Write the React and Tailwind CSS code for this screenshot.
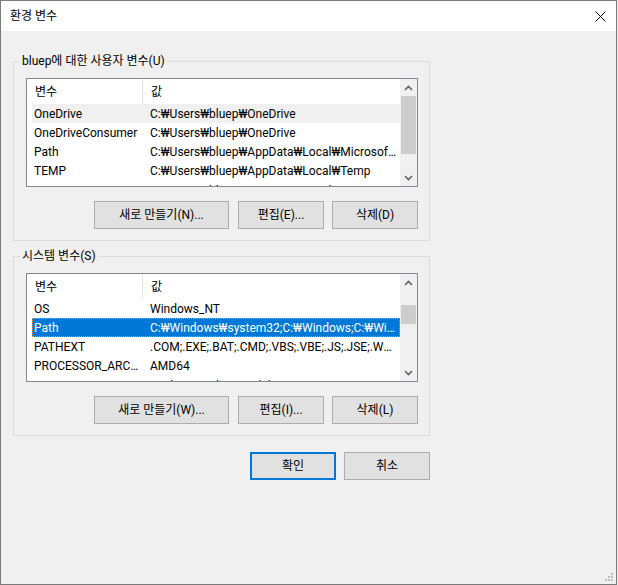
import React from 'react';

const userVars = [
  ['OneDrive', 'C:₩Users₩bluep₩OneDrive'],
  ['OneDriveConsumer', 'C:₩Users₩bluep₩OneDrive'],
  ['Path', 'C:₩Users₩bluep₩AppData₩Local₩Microsoft₩WindowsApps;'],
  ['TEMP', 'C:₩Users₩bluep₩AppData₩Local₩Temp'],
  ['TMP', 'C:₩Users₩bluep₩AppData₩Local₩Temp'],
];

const systemVars = [
  ['OS', 'Windows_NT'],
  ['Path', 'C:₩Windows₩system32;C:₩Windows;C:₩Windows₩System32₩Wbem;'],
  ['PATHEXT', '.COM;.EXE;.BAT;.CMD;.VBS;.VBE;.JS;.JSE;.WSF;.WSH;.MSC'],
  ['PROCESSOR_ARCHITECTURE', 'AMD64'],
  ['PROCESSOR_IDENTIFIER', 'Intel64 Family 6 Model 158 Stepping 10, GenuineIntel'],
];

function Chevron({ up }) {
  return (
    <svg width="9" height="6" viewBox="0 0 9 6" fill="none">
      <path
        d={up ? 'M1 5 L4.5 1.5 L8 5' : 'M1 1 L4.5 4.5 L8 1'}
        stroke="#606060"
        strokeWidth="1.6"
      />
    </svg>
  );
}

function ScrollBar({ thumbOffset, thumbHeight }) {
  return (
    <div className="w-[17px] bg-[#f0f0f0] flex flex-col">
      <div className="h-[17px] flex items-center justify-center">
        <Chevron up />
      </div>
      <div className="flex-1 flex flex-col">
        <div className="shrink-0" style={{ height: thumbOffset }} />
        <div className="mx-[1px] bg-[#cdcdcd] shrink-0" style={{ height: thumbHeight }} />
      </div>
      <div className="h-[17px] flex items-center justify-center">
        <Chevron />
      </div>
    </div>
  );
}

function ListView({ rows, selected, focused, thumbOffset, thumbHeight }) {
  return (
    <div className="w-[392px] h-[109px] border border-[#828790] bg-white flex">
      <div className="flex-1 overflow-hidden">
        {/* header */}
        <div className="h-[25px] flex items-center">
          <div className="w-[116px] h-full pl-[8px] flex items-center border-r border-[#e5e5e5]">변수</div>
          <div className="pl-[8px]">값</div>
        </div>
        {rows.map(([name, value], i) => {
          const isFocused = i === focused;
          const isSelected = i === selected;
          return (
            <div
              key={name}
              className={`ml-[5px] h-[19px] flex items-center ${
                isFocused
                  ? 'bg-[#0078d7] text-white border border-dotted border-[#f7931e]'
                  : isSelected
                  ? 'bg-[#f0f0f0]'
                  : ''
              } ${i === rows.length - 1 ? 'pt-[3px]' : ''}`}
            >
              <div className={`w-[111px] shrink-0 truncate ${isFocused ? 'pl-[1px]' : 'pl-[2px]'}`}>{name}</div>
              <div className={`flex-1 min-w-0 pr-[4px] truncate ${isFocused ? 'pl-[6px]' : 'pl-[7px]'}`}>{value}</div>
            </div>
          );
        })}
      </div>
      <ScrollBar thumbOffset={thumbOffset} thumbHeight={thumbHeight} />
    </div>
  );
}

function Button({ children, primary, className = '' }) {
  return (
    <button
      className={`h-[28px] bg-[#e1e1e1] text-black text-[12px] flex items-center justify-center ${
        primary ? 'border-2 border-[#0078d7]' : 'border border-[#adadad]'
      } ${className}`}
    >
      {children}
    </button>
  );
}

function Group({ label, children }) {
  return (
    <fieldset className="w-[417px] border border-[#dcdcdc] p-0 m-0">
      <legend className="ml-[6px] px-[2px] text-[12px] leading-[16px]">{label}</legend>
      <div className="pl-[12px] pt-[9px] pb-[11px]">{children}</div>
    </fieldset>
  );
}

export default function App() {
  return (
    <div className="w-[618px] h-[585px] bg-[#f0f0f0] font-['Roboto','Noto_Sans_CJK_KR',sans-serif] text-[12px] text-black">
      <div className="relative w-[617px] h-[585px] border border-[#7a7a7a] bg-[#f0f0f0] flex flex-col">
        {/* title bar */}
        <div className="h-[30px] bg-white flex items-center justify-between pl-[9px] pr-[9px]">
          <span className="text-[12px]">환경 변수</span>
          <svg width="11" height="11" viewBox="0 0 11 11" className="mr-[1px]">
            <path d="M0.5 0.5 L10.5 10.5 M10.5 0.5 L0.5 10.5" stroke="#000" strokeWidth="1" />
          </svg>
        </div>

        <div className="pl-[12px] pt-[22px]">
          <Group label="bluep에 대한 사용자 변수(U)">
            <ListView rows={userVars} selected={0} focused={-1} thumbOffset={0} thumbHeight={58} />
            <div className="w-[392px] mt-[14px] flex justify-end">
              <Button className="w-[135px]">새로 만들기(N)...</Button>
              <Button className="w-[86px] ml-[9px]">편집(E)...</Button>
              <Button className="w-[86px] ml-[8px]">삭제(D)</Button>
            </div>
          </Group>

          <div className="mt-[7px]">
            <Group label="시스템 변수(S)">
              <ListView rows={systemVars} selected={-1} focused={1} thumbOffset={14} thumbHeight={19} />
              <div className="w-[392px] mt-[14px] flex justify-end">
                <Button className="w-[135px]">새로 만들기(W)...</Button>
                <Button className="w-[86px] ml-[9px]">편집(I)...</Button>
                <Button className="w-[86px] ml-[8px]">삭제(L)</Button>
              </div>
            </Group>
          </div>

          <div className="w-[417px] mt-[16px] flex justify-end gap-[8px]">
            <Button primary className="w-[86px]">확인</Button>
            <Button className="w-[86px]">취소</Button>
          </div>
        </div>

        {/* resize grip */}
        <svg width="9" height="9" viewBox="0 0 9 9" className="absolute right-[2px] bottom-[2px]">
          <rect x="6" y="0" width="2" height="2" fill="#bcbcbc" />
          <rect x="3" y="3" width="2" height="2" fill="#bcbcbc" />
          <rect x="6" y="3" width="2" height="2" fill="#bcbcbc" />
          <rect x="0" y="6" width="2" height="2" fill="#bcbcbc" />
          <rect x="3" y="6" width="2" height="2" fill="#bcbcbc" />
          <rect x="6" y="6" width="2" height="2" fill="#bcbcbc" />
        </svg>
      </div>
    </div>
  );
}
